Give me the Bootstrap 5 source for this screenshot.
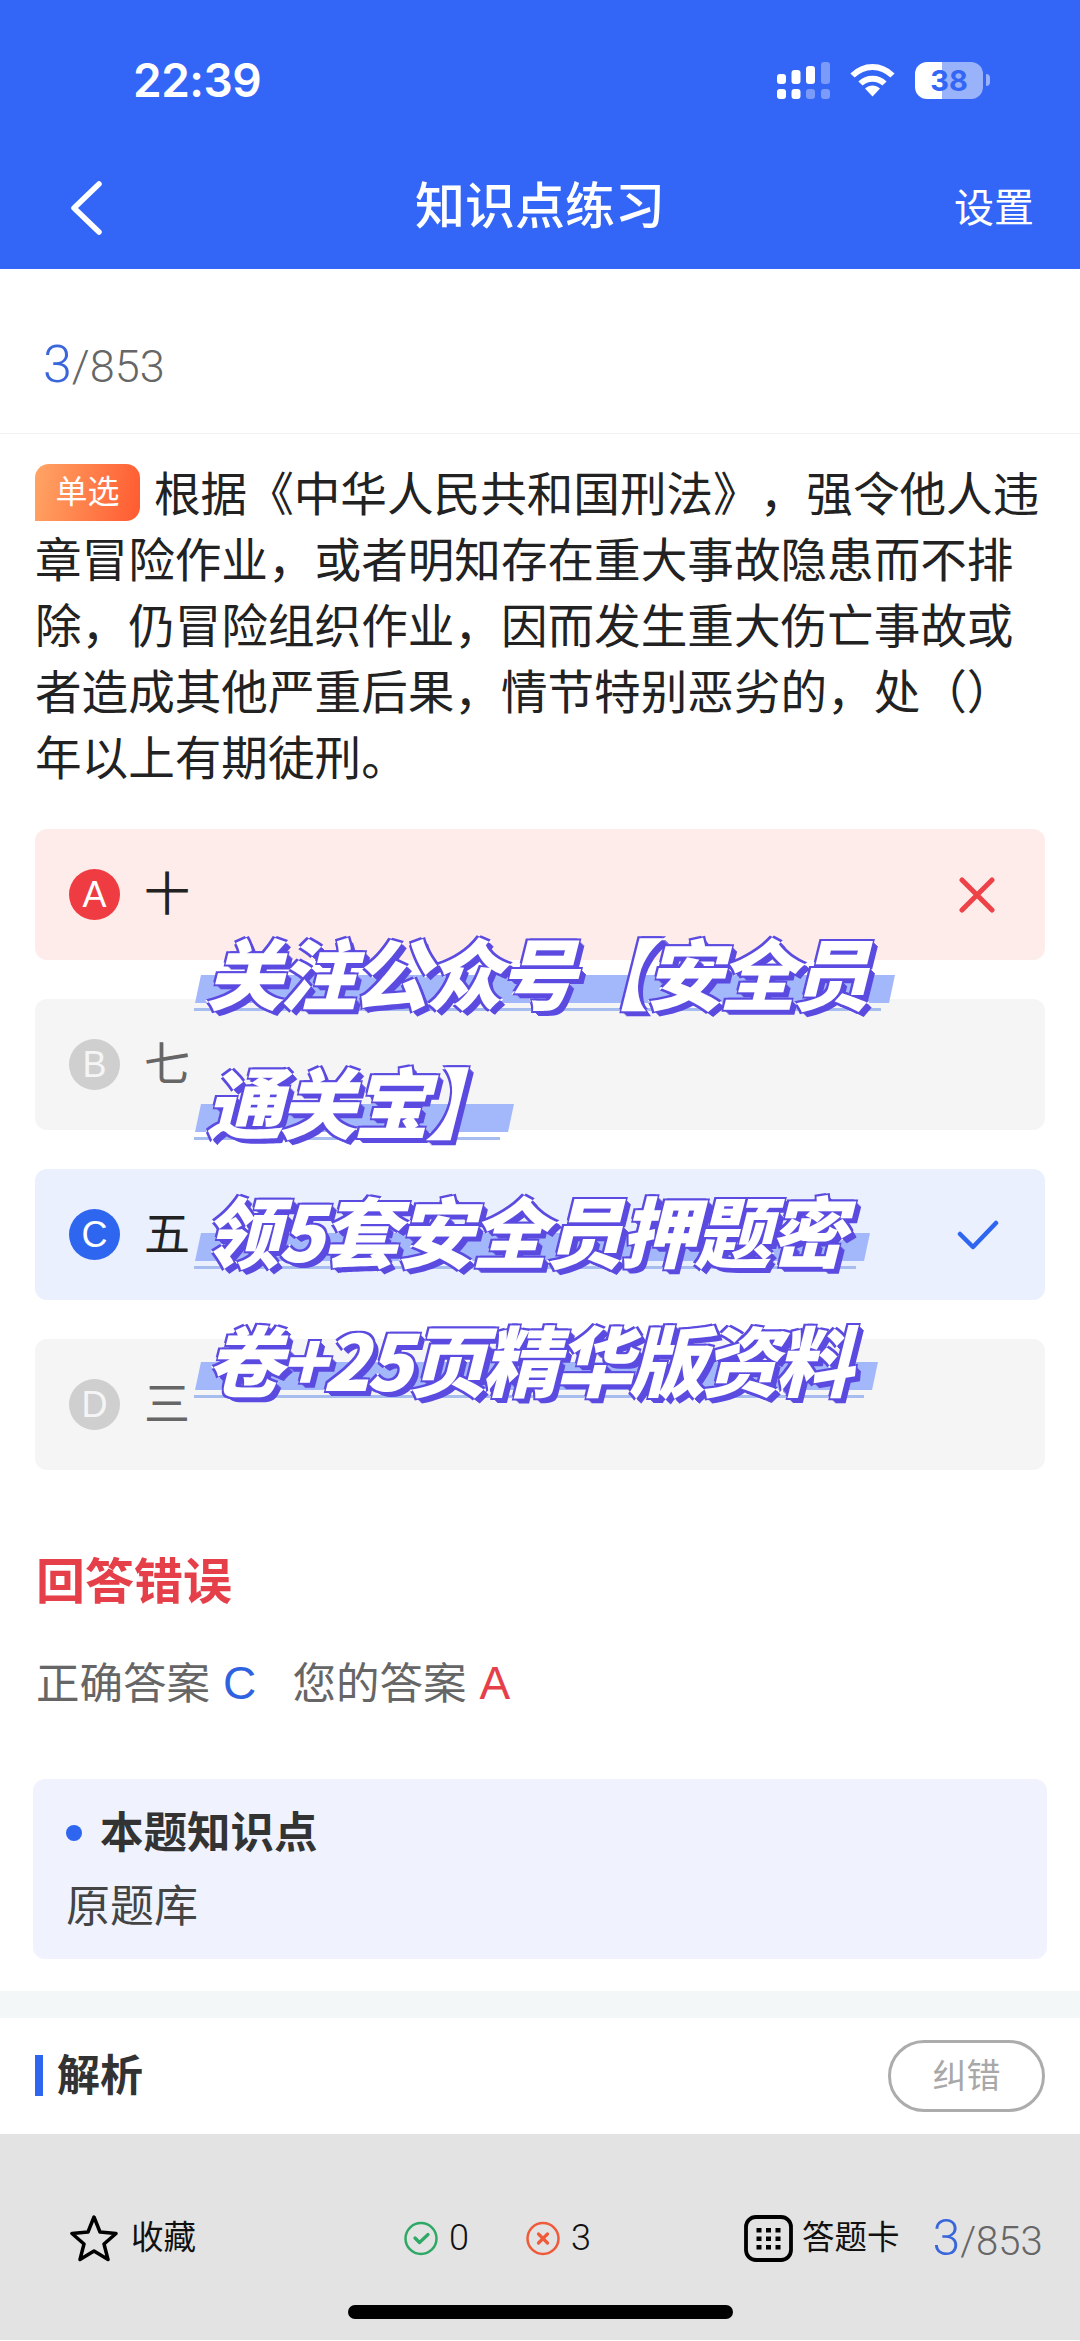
<!DOCTYPE html>
<html lang="zh-CN">

<head>
    <meta charset="UTF-8">
    <meta name="viewport" content="width=device-width, initial-scale=1.0">
    <title>知识点练习</title>
    <link href="https://cdn.jsdelivr.net/npm/bootstrap@5.3.2/dist/css/bootstrap.min.css" rel="stylesheet">
    <style>
        body {
            width: 1080px;
            height: 2341px;
            overflow: hidden;
            background-color: #fff;
            font-family: "Liberation Sans", "Noto Sans CJK SC", sans-serif;
            color: #333;
            text-spacing-trim: space-all;
        }

        .app-page {
            position: relative;
            height: 2341px;
        }

        /* top blue area */
        .top-area {
            height: 269px;
            background-color: #3366f6;
            color: #fff;
        }

        .status-row {
            height: 160px;
            padding: 0 90px 0 133px;
        }

        .clock {
            font-family: Inter, sans-serif;
            font-size: 46px;
            font-weight: 600;
            letter-spacing: -0.5px;
        }

        .status-icons {
            gap: 20px;
        }

        .battery-wrap {
            gap: 3px;
        }

        .battery-body {
            width: 68px;
            height: 37px;
            border-radius: 12px;
            background: linear-gradient(to right, #fff 40%, rgba(255, 255, 255, .5) 40%);
            color: #3366f6;
            font-family: Inter, sans-serif;
            font-size: 29px;
            font-weight: 700;
            line-height: 37px;
            text-align: center;
        }

        .battery-tip {
            width: 4px;
            height: 12px;
            border-radius: 0 4px 4px 0;
            background-color: rgba(255, 255, 255, .5);
        }

        .nav-row {
            height: 92px;
            padding: 3px 46px 0 70px;
        }

        .nav-title {
            position: absolute;
            left: 0;
            right: 0;
            text-align: center;
            font-size: 50px;
            font-weight: 500;
        }

        .nav-setting {
            font-size: 40px;
        }

        /* counter */
        .counter-row {
            height: 165px;
            padding: 27px 0 0 43px;
            border-bottom: 1px solid #f1f1f1;
        }

        .count-now {
            color: #3a66dc;
            font-family: Roboto, sans-serif;
            font-size: 52px;
            font-weight: 300;
        }

        .count-total {
            color: #666;
            font-family: Roboto, sans-serif;
            font-size: 45px;
            font-weight: 300;
        }

        /* question */
        .question-text {
            margin: 28px 35px 37px 35px;
            font-size: 46.6px;
            line-height: 66px;
            color: #222;
        }

        .kind-tag {
            display: inline-block;
            width: 105px;
            height: 57px;
            margin: 2px 14px 0 0;
            border-radius: 14px 14px 14px 0;
            background: linear-gradient(100deg, #ffa565, #ff5a30);
            color: #fff;
            font-size: 32px;
            line-height: 57px;
            text-align: center;
            vertical-align: top;
        }

        .option-list {
            margin: 0 35px;
            gap: 39px;
        }

        .option-item {
            height: 131px;
            padding: 0 46px 0 34px;
            border-radius: 12px;
            background-color: #f5f5f6;
            color: #666;
            font-size: 46px;
        }

        .option-item.is-wrong {
            background-color: #feeceb;
            color: #222;
        }

        .option-item.is-right {
            background-color: #eaf0fe;
            color: #222;
        }

        .option-letter {
            width: 51px;
            height: 51px;
            margin-right: 24px;
            border-radius: 50%;
            background-color: #cfcfcf;
            color: #f5f5f5;
            font-size: 36px;
            line-height: 51px;
            text-align: center;
        }

        .is-wrong .option-letter {
            background-color: #ee3c42;
            color: #fff;
        }

        .is-right .option-letter {
            background-color: #2f66f0;
            color: #fff;
        }

        /* result */
        .verdict {
            margin: 82px 0 0 36px;
            color: #e5404a;
            font-size: 49px;
            font-weight: 700;
            line-height: 60px;
        }

        .answer-line {
            margin: 46px 0 0 36px;
            color: #666;
            font-size: 43.5px;
            line-height: 50px;
        }

        .answer-group+.answer-group {
            margin-left: 24px;
        }

        .answer-key {
            margin-left: 1px;
            font-size: 46px;
        }

        .text-c-blue {
            color: #2f62e0;
        }

        .text-c-red {
            color: #e5404a;
        }

        .point-box {
            height: 180px;
            margin: 70px 33px 0;
            padding: 27px 33px 0;
            border-radius: 12px;
            background-color: #f0f3fd;
        }

        .point-head {
            font-size: 43.5px;
            font-weight: 700;
            line-height: 54px;
            color: #333;
        }

        .point-dot {
            width: 16px;
            height: 16px;
            margin-right: 18px;
            border-radius: 50%;
            background-color: #2f66f0;
        }

        .point-body {
            margin-top: 20px;
            font-size: 44px;
            line-height: 54px;
            color: #444;
        }

        .gap-band {
            height: 27px;
            margin-top: 32px;
            background-color: #f4f7f7;
        }

        .analysis-row {
            height: 116px;
            padding: 0 35px;
        }

        .analysis-title {
            font-size: 43px;
            font-weight: 700;
            color: #333;
        }

        .analysis-title::before {
            content: "";
            display: inline-block;
            width: 8px;
            height: 41px;
            margin-right: 14px;
            background-color: #2f66f0;
            vertical-align: -5px;
        }

        .report-btn {
            width: 157px;
            height: 72px;
            border: 3px solid #acacac;
            border-radius: 36px;
            color: #a8a8a8;
            font-size: 34px;
        }

        /* bottom bar */
        .bottom-bar {
            height: 206px;
            padding: 80px 0 0 70px;
            background-color: #e3e3e3;
            color: #111;
        }

        .bar-main {
            height: 48px;
            white-space: nowrap;
        }

        .bar-main svg {
            flex-shrink: 0;
        }

        .fav-group {
            gap: 13px;
        }

        .bar-label {
            font-size: 32.500px;
        }

        .bar-num {
            font-family: Roboto, sans-serif;
            font-size: 36px;
            font-weight: 300;
        }

        .stats-group {
            margin-left: 207px;
            gap: 10px;
        }

        .stat-gap {
            margin-right: 46px;
        }

        .card-group-right {
            margin-left: 153px;
            gap: 9px;
        }

        .bar-count {
            margin-left: 24px;
        }

        .bar-count .count-now {
            font-size: 50px;
        }

        .bar-count .count-total {
            font-size: 40px;
        }

        .home-line {
            width: 385px;
            height: 14px;
            margin: 43px auto 0 278px;
            border-radius: 7px;
            background-color: #000;
        }

        /* promo lines laid over the options */
        .promo-lines {
            position: absolute;
            left: 194px;
            top: 906px;
            z-index: 5;
        }

        .promo-line {
            position: relative;
            isolation: isolate;
            width: fit-content;
            height: 129px;
            padding: 0 26px 0 12px;
            font-family: "Noto Sans CJK SC", sans-serif;
            font-size: 77px;
            font-style: italic;
            font-weight: 900;
            letter-spacing: -3.700px;
            line-height: 129px;
            white-space: nowrap;
            color: #fff;
            -webkit-text-stroke: 3px #fff;
            paint-order: stroke fill;
            text-shadow: -2px -2px 0 #5b4be0, 2px -2px 0 #5b4be0, -2px 2px 0 #5b4be0, 2px 2px 0 #5b4be0,
                3px 3px 0 #5b4be0, 4px 4px 0 #5b4be0, 5px 5px 0 #5b4be0;
        }

        .promo-line.is-short {
            padding-right: 12px;
        }

        .promo-line.is-wide {
            padding: 0 24px 0 9px;
            letter-spacing: -2.500px;
        }

        .promo-line::before {
            content: "";
            position: absolute;
            z-index: -1;
            left: 4px;
            right: 0;
            top: 69px;
            height: 28px;
            background-color: #a3b8fb;
            transform: skewX(-12deg);
        }

        .promo-line::after {
            content: "";
            position: absolute;
            z-index: -1;
            left: 0;
            right: 11px;
            top: 102px;
            height: 3px;
            background-color: #a7bdf0;
        }
    </style>
</head>

<body>
    <div class="app-page">
        <!-- Header -->
        <header class="top-area">
            <div class="status-row d-flex justify-content-between align-items-center">
                <span class="clock">22:39</span>
                <div class="status-icons d-flex align-items-center">
                    <svg width="53" height="37" viewBox="0 0 53 37" fill="#fff">
                        <rect x="0" y="12" width="9" height="10" rx="3" />
                        <rect x="14.500" y="8" width="9" height="14" rx="3" />
                        <rect x="29" y="4" width="9" height="18" rx="3" />
                        <rect x="44" y="0" width="9" height="22" rx="3" opacity=".35" />
                        <rect x="0" y="27" width="9" height="10" rx="3" />
                        <rect x="14.500" y="27" width="9" height="10" rx="3" />
                        <rect x="29" y="27" width="9" height="10" rx="3" opacity=".35" />
                        <rect x="44" y="27" width="9" height="10" rx="3" opacity=".35" />
                    </svg>
                    <svg width="45" height="34" viewBox="0 0 45 34" fill="none" stroke="#fff" stroke-width="6">
                        <path d="M2.500 12.500C14 1 31 1 42.500 12.500" />
                        <path d="M10.500 20.500C17 14 28 14 34.500 20.500" />
                        <path d="M15 25.500C19.500 21.500 25.500 21.500 30 25.500L22.500 33.500Z" fill="#fff" stroke="none" />
                    </svg>
                    <div class="battery-wrap d-flex align-items-center">
                        <div class="battery-body">38</div>
                        <div class="battery-tip"></div>
                    </div>
                </div>
            </div>
            <div class="nav-row position-relative d-flex justify-content-between align-items-center">
                <svg width="32" height="54" viewBox="0 0 32 54" fill="none" stroke="#fff" stroke-width="5.500"
                    stroke-linecap="round" stroke-linejoin="round">
                    <path d="M29 3L4 27L29 51" />
                </svg>
                <span class="nav-title">知识点练习</span>
                <span class="nav-setting">设置</span>
            </div>
        </header>

        <!-- Progress -->
        <div class="counter-row d-flex align-items-center">
            <span><span class="count-now">3</span><span class="count-total">/853</span></span>
        </div>

        <!-- Question -->
        <p class="question-text"><span class="kind-tag">单选</span>根据《中华人民共和国刑法》，强令他人违章冒险作业，或者明知存在重大事故隐患而不排除，仍冒险组织作业，因而发生重大伤亡事故或者造成其他严重后果，情节特别恶劣的，处（）年以上有期徒刑。</p>

        <div class="option-list d-flex flex-column">
            <div class="option-item is-wrong d-flex align-items-center">
                <span class="option-letter">A</span>
                <span class="flex-grow-1">十</span>
                <svg class="me-1" width="36" height="36" viewBox="0 0 36 36" fill="none" stroke="#ec4248" stroke-width="5"
                    stroke-linecap="round">
                    <path d="M3 3L33 33M33 3L3 33" />
                </svg>
            </div>
            <div class="option-item d-flex align-items-center">
                <span class="option-letter">B</span>
                <span class="flex-grow-1">七</span>
            </div>
            <div class="option-item is-right d-flex align-items-center">
                <span class="option-letter">C</span>
                <span class="flex-grow-1">五</span>
                <svg width="42" height="30" viewBox="0 0 42 30" fill="none" stroke="#2f66f0" stroke-width="4.500"
                    stroke-linecap="round" stroke-linejoin="round">
                    <path d="M3 14L16 27L39 3" />
                </svg>
            </div>
            <div class="option-item d-flex align-items-center">
                <span class="option-letter">D</span>
                <span class="flex-grow-1">三</span>
            </div>
        </div>

        <!-- Result -->
        <div class="verdict">回答错误</div>
        <div class="answer-line">
            <span class="answer-group">正确答案 <span class="answer-key text-c-blue">C</span></span>
            <span class="answer-group">您的答案 <span class="answer-key text-c-red">A</span></span>
        </div>

        <div class="point-box">
            <div class="point-head d-flex align-items-center"><span class="point-dot"></span>本题知识点</div>
            <div class="point-body">原题库</div>
        </div>

        <div class="gap-band"></div>

        <div class="analysis-row d-flex justify-content-between align-items-center">
            <span class="analysis-title">解析</span>
            <span class="report-btn d-flex justify-content-center align-items-center">纠错</span>
        </div>

        <!-- Bottom bar -->
        <footer class="bottom-bar">
            <div class="bar-main d-flex align-items-center">
                <div class="fav-group d-flex align-items-center">
                    <svg width="48" height="48" viewBox="0 0 48 48" fill="none" stroke="#000" stroke-width="3.500"
                        stroke-linejoin="round">
                        <path d="M24 3L30 18L46 19.500L34 30L38 45.500L24 37L10 45.500L14 30L2 19.500L18 18Z" />
                    </svg>
                    <span class="bar-label">收藏</span>
                </div>
                <div class="stats-group d-flex align-items-center">
                    <svg width="36" height="35" viewBox="0 0 36 35" fill="none" stroke="#2fa866" stroke-width="2.500">
                        <circle cx="18" cy="17.500" r="15.500" />
                        <path d="M12 17L16.500 21.500L25 13.500" stroke-width="3.200" stroke-linecap="round" stroke-linejoin="round" />
                    </svg>
                    <span class="bar-num stat-gap">0</span>
                    <svg width="36" height="35" viewBox="0 0 36 35" fill="none" stroke="#ee5a3a" stroke-width="2.500">
                        <circle cx="18" cy="17.500" r="15.500" />
                        <path d="M13.500 13L22.500 22M22.500 13L13.500 22" stroke-width="3.200" stroke-linecap="round" />
                    </svg>
                    <span class="bar-num">3</span>
                </div>
                <div class="card-group-right d-flex align-items-center">
                    <svg width="49" height="47" viewBox="0 0 49 47" fill="none" stroke="#000" stroke-width="3.800">
                        <rect x="2" y="2" width="45" height="43" rx="10" />
                        <g fill="#000" stroke="none">
                            <rect x="12.500" y="13" width="5" height="4.500" />
                            <rect x="22" y="13" width="5" height="4.500" />
                            <rect x="31.500" y="13" width="5" height="4.500" />
                            <rect x="12.500" y="21.500" width="5" height="4.500" />
                            <rect x="22" y="21.500" width="5" height="4.500" />
                            <rect x="31.500" y="21.500" width="5" height="4.500" />
                            <rect x="12.500" y="30" width="5" height="4.500" />
                            <rect x="22" y="30" width="5" height="4.500" />
                            <rect x="31.500" y="30" width="5" height="4.500" />
                        </g>
                    </svg>
                    <span class="bar-label">答题卡</span>
                    <span class="bar-count"><span class="count-now">3</span><span class="count-total">/853</span></span>
                </div>
            </div>
            <div class="home-line"></div>
        </footer>

        <!-- Promo lines -->
        <div class="promo-lines">
            <div class="promo-line">关注公众号【安全员</div>
            <div class="promo-line is-short">通关宝】</div>
            <div class="promo-line is-wide">领5套安全员押题密</div>
            <div class="promo-line">卷+25页精华版资料</div>
        </div>
    </div>

    <script src="https://cdn.jsdelivr.net/npm/bootstrap@5.3.2/dist/js/bootstrap.bundle.min.js"></script>
</body>

</html>
